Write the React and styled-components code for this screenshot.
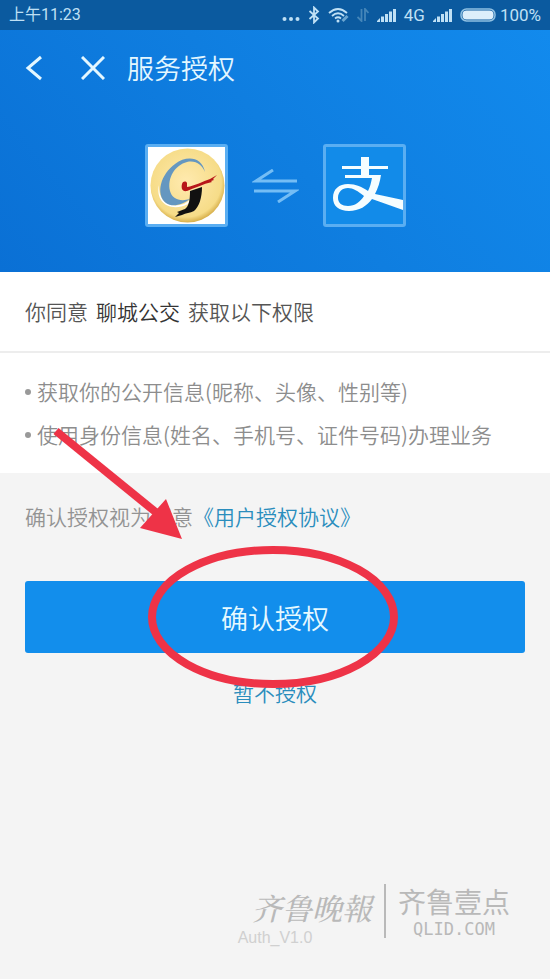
import React from "react";
import styled, { createGlobalStyle } from "styled-components";

const GlobalStyle = createGlobalStyle`
  * {
    box-sizing: border-box;
  }

  body {
    margin: 0;
    background: #f4f4f4;
    font-family: "Noto Sans CJK SC", "Noto Sans", sans-serif;
    font-weight: 350;
  }

  button {
    margin: 0;
    padding: 0;
    border: 0;
    background: none;
    font: inherit;
    cursor: pointer;
  }

  svg {
    display: block;
    flex: none;
  }
`;

const Page = styled.div`
  position: relative;
  display: flex;
  flex-direction: column;
  min-height: 100vh;
  overflow: hidden;
`;

const Hero = styled.header`
  background: linear-gradient(50deg, #0a70d5 0%, #0f7ee0 50%, #128bee 100%);
`;

const StatusBar = styled.div`
  display: flex;
  align-items: center;
  justify-content: space-between;
  height: 30px;
  padding: 0 9px;
  background: #0b5a9f;
  color: #bfe0f5;
  font-family: Roboto, "Noto Sans CJK SC", sans-serif;
  font-size: 17px;
  font-weight: 400;
  line-height: 30px;
`;

const Time = styled.span`
  font-size: 16px;
`;

const StatusIcons = styled.div`
  display: flex;
  align-items: center;
  gap: 8px;
`;

const BatteryLevel = styled.div`
  display: flex;
  align-items: center;
  gap: 4px;
`;

const NavBar = styled.nav`
  display: flex;
  align-items: center;
  height: 76px;
  padding: 0 23px;
`;

const NavButton = styled.button`
  display: flex;
  align-items: center;
  justify-content: center;
  width: 24px;
  height: 40px;
  margin-right: ${(props) => props.$gap}px;
  color: #e4f7ff;
`;

const Title = styled.h1`
  margin: 0;
  color: #e4f7ff;
  font-size: 27px;
  font-weight: 350;
  line-height: 40px;
`;

const Logos = styled.div`
  display: flex;
  align-items: center;
  justify-content: center;
  gap: 24px;
  padding: 38px 0 45px;
`;

const LogoTile = styled.div`
  width: 83px;
  height: 83px;
  border: 3px solid #5aaef2;
  border-radius: 3px;
  background: ${(props) => props.$background};
  overflow: hidden;
`;

const Consent = styled.p`
  display: flex;
  flex-wrap: wrap;
  gap: 8px;
  margin: 0;
  padding: 23px 25px 24px;
  border-bottom: 2px solid #ededed;
  background: #fff;
  color: #555;
  font-size: 21px;
  line-height: 32px;

  strong {
    color: #333;
    font-weight: 350;
  }
`;

const Permissions = styled.ul`
  margin: 0;
  padding: 17px 25px;
  background: #fff;
  list-style: none;
`;

const Permission = styled.li`
  display: flex;
  align-items: center;
  gap: 6px;
  color: #8d8d8d;
  font-size: 21px;
  line-height: 43px;

  &::before {
    content: "";
    width: 6px;
    height: 6px;
    border-radius: 50%;
    background: #999;
  }
`;

const Main = styled.main`
  padding: 29px 25px;
`;

const Agreement = styled.p`
  display: flex;
  flex-wrap: wrap;
  margin: 0 0 51px;
  color: #939393;
  font-size: 21px;
  line-height: 28px;

  a {
    color: #2a8dbd;
    text-decoration: none;
  }
`;

const ConfirmWrap = styled.div`
  position: relative;
`;

const ConfirmButton = styled.button`
  display: block;
  width: 100%;
  height: 72px;
  border-radius: 3px;
  background: #128eec;
  color: #e6f9ff;
  font-size: 27px;
`;

const DeclineButton = styled.button`
  display: block;
  margin: 25px auto 0;
  color: #2a8dbd;
  font-size: 21px;
  line-height: 28px;
`;

const Circle = styled.svg`
  position: absolute;
  top: 50%;
  left: 50%;
  transform: translate(-50%, -50%);
  pointer-events: none;
`;

const Arrow = styled.svg`
  position: absolute;
  left: 25px;
  bottom: 106px;
  pointer-events: none;
`;

const Version = styled.footer`
  margin-top: auto;
  padding-bottom: 31px;
  color: #d0d0d0;
  font-family: "Liberation Sans", sans-serif;
  font-size: 16px;
  font-weight: 400;
  line-height: 20px;
  text-align: center;
`;

const Watermark = styled.div`
  position: absolute;
  right: 40px;
  bottom: 41px;
  display: flex;
  align-items: center;
  gap: 12px;
  color: #b9b9b9;
`;

const PaperName = styled.span`
  padding-bottom: 8px;
  font-family: "Noto Serif CJK SC", "Noto Sans CJK SC", serif;
  font-size: 30px;
  font-style: italic;
  font-weight: 500;
  line-height: 32px;
`;

const Brand = styled.div`
  display: flex;
  flex-direction: column;
  align-items: center;
  gap: 4px;
  padding: 2px 0 0 12px;
  border-left: 2px solid #b9b9b9;
  font-size: 28px;
  font-weight: 400;
  line-height: 30px;

  small {
    font-family: "DejaVu Sans Mono", monospace;
    font-size: 17px;
    line-height: 18px;
  }
`;

const Bluetooth = () => (
  <svg width="12" height="18" viewBox="0 0 12 18" fill="none" stroke="currentColor" strokeWidth="1.8">
    <path d="M1.500 5 10 12.500 6 16.500V1.500L10 5.500 1.500 13" />
  </svg>
);

const Wifi = () => (
  <svg width="21" height="16" viewBox="0 0 21 16" fill="none" stroke="currentColor" strokeWidth="1.8">
    <path d="M1 6Q10 -2 19 6M4 9Q10 3.500 16 9M7 11.500Q10 9 13 11.500" />
    <circle cx="10" cy="14" r="1.500" fill="currentColor" stroke="none" />
    <path d="m14.500 14 5-5" stroke="#6aa5d0" strokeWidth="3" />
  </svg>
);

const Transfer = () => (
  <svg width="12" height="14" viewBox="0 0 12 14" fill="none" stroke="#4586b9" strokeWidth="1.8">
    <path d="M4.500 1v12L.5 9M8 13V1l3.500 4" />
  </svg>
);

const Signal = () => (
  <svg width="19" height="14" viewBox="0 0 19 14" fill="currentColor">
    <path d="M0 13q2-2 3-3v4H0zM4 8.500H7V14H4zM8 6H11v8H8zM12 3.500H15V14H12zM16 1H19v13H16z" />
  </svg>
);

const Battery = () => (
  <svg width="36" height="14" viewBox="0 0 36 14">
    <rect x="1" y="1" width="34" height="12" rx="5.500" fill="none" stroke="#8fc0e2" strokeWidth="1.500" />
    <rect x="2.500" y="2.500" width="31" height="9" rx="4" fill="#dceefb" />
  </svg>
);

const BusLogo = () => (
  <svg width="77" height="77" viewBox="0 0 77 77">
    <defs>
      <radialGradient id="gold" cx="48%" cy="45%" r="56%">
        <stop offset="0" stopColor="#ffeaaf" />
        <stop offset="0.850" stopColor="#f6dc88" />
        <stop offset="1" stopColor="#d3a942" />
      </radialGradient>
    </defs>
    <circle cx="39.500" cy="38.500" r="37" fill="url(#gold)" />
    <path d="M11 38c-1 15 9 24 25 19l6-4-2 4C22 66 7 55 11 38z" fill="#fff" />
    <path
      d="M57 25C54 10 39 8 27 17 13 27 7 47 18 56c7 5 17 1 24-4-10 3-18 0-20-8-3-13 5-26 17-29 9-2 15 3 18 10z"
      fill="#6597c0"
    />
    <path d="M42 44l12-4c0 11-3 20-8 24-4 2-8 2-12 4l-7 2 4-4-2-1c3-1 5-2 8-3 4-3 5-9 5-18z" fill="#111" />
    <path d="M34 37c1-3 4-3 5-1v4c8-1 16-6 23-8l7-4-4 4 1 1-3 1 1 1c-9 2-17 6-25 9-5 1-6-3-5-7z" fill="#b7171a" />
  </svg>
);

const AlipayLogo = () => (
  <svg width="77" height="77" viewBox="0 0 77 77" fill="#f5fdff">
    <path
      fillRule="evenodd"
      d="M35 10h8v9h19v3H43v6h12c-1 7-3 13-6 19l28 6v10L46 52C41 59 33 64 23 64 13 64 7 59 7 51c0-9 6-14 15-14 8 0 14 3 20 7 2-4 3-8 4-13H19v-3h16v-6H16v-3h19zM38 49C32 44 27 41 22 41c-6 0-10 4-10 10 0 5 4 8 10 8 7 0 12-4 16-10z"
    />
  </svg>
);

const App = () => (
  <Page>
    <GlobalStyle />
    <Hero>
      <StatusBar>
        <Time>上午11:23</Time>
        <StatusIcons>
          <svg width="18" height="14" viewBox="0 0 18 14" fill="currentColor">
            <circle cx="2.500" cy="11" r="2" />
            <circle cx="9" cy="11" r="2" />
            <circle cx="15.500" cy="11" r="2" />
          </svg>
          <Bluetooth />
          <Wifi />
          <Transfer />
          <Signal />
          <span>4G</span>
          <Signal />
          <BatteryLevel>
            <Battery />
            <span>100%</span>
          </BatteryLevel>
        </StatusIcons>
      </StatusBar>
      <NavBar>
        <NavButton $gap={34} aria-label="返回">
          <svg width="20" height="26" viewBox="0 0 20 26" fill="none" stroke="currentColor" strokeWidth="3">
            <path d="M16 2 3 13l13 11" />
          </svg>
        </NavButton>
        <NavButton $gap={22} aria-label="关闭">
          <svg width="24" height="24" viewBox="0 0 24 24" fill="none" stroke="currentColor" strokeWidth="3">
            <path d="m1 1 22 22M23 1 1 23" />
          </svg>
        </NavButton>
        <Title>服务授权</Title>
      </NavBar>
      <Logos>
        <LogoTile $background="#fff">
          <BusLogo />
        </LogoTile>
        <svg width="47" height="34" viewBox="0 0 47 34" fill="none" stroke="#74bdf5" strokeWidth="3">
          <path d="M21 1 4 12h41M2 22h41L26 33" />
        </svg>
        <LogoTile $background="#128be9">
          <AlipayLogo />
        </LogoTile>
      </Logos>
    </Hero>

    <Consent>
      <span>你同意</span>
      <strong>聊城公交</strong>
      <span>获取以下权限</span>
    </Consent>
    <Permissions>
      <Permission>获取你的公开信息(昵称、头像、性别等)</Permission>
      <Permission>使用身份信息(姓名、手机号、证件号码)办理业务</Permission>
    </Permissions>

    <Main>
      <Agreement>
        <span>确认授权视为同意</span>
        <a href="#agreement">《用户授权协议》</a>
      </Agreement>
      <ConfirmWrap>
        <ConfirmButton>确认授权</ConfirmButton>
        <Arrow width="136" height="122" viewBox="0 0 136 122">
          <path d="m6 6 102 83" stroke="#ee3347" strokeWidth="8" />
          <path d="m116 74-26 29 42 11z" fill="#ee3347" />
        </Arrow>
        <Circle width="256" height="146" viewBox="0 0 256 146">
          <ellipse cx="126" cy="73" rx="121" ry="67" fill="none" stroke="#ee3347" strokeWidth="8" />
        </Circle>
      </ConfirmWrap>
      <DeclineButton>暂不授权</DeclineButton>
    </Main>

    <Version>Auth_V1.0</Version>
    <Watermark>
      <PaperName>齐鲁晚報</PaperName>
      <Brand>
        <span>齐鲁壹点</span>
        <small>QLID.COM</small>
      </Brand>
    </Watermark>
  </Page>
);

export default App;
